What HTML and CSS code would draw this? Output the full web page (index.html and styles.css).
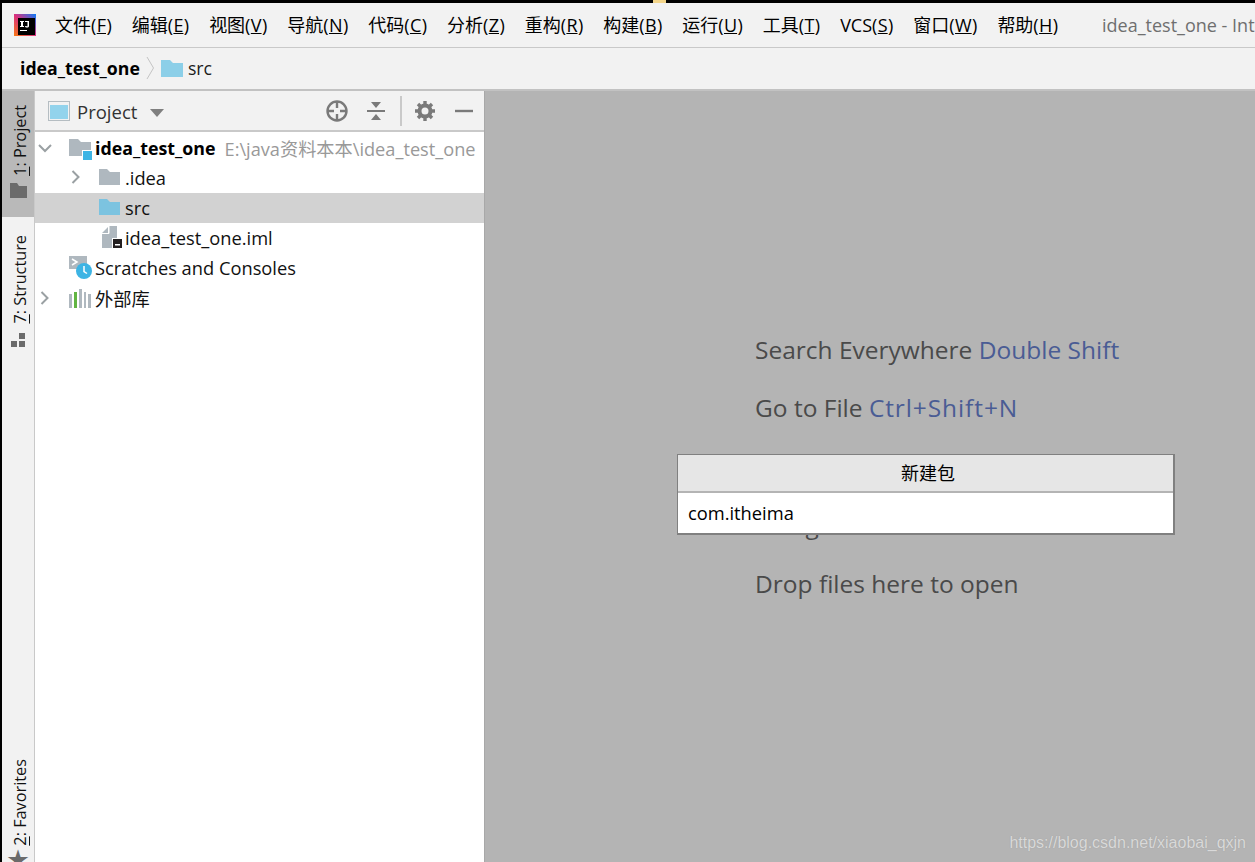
FILE: index.html
```html
<!DOCTYPE html>
<html lang="zh">
<head>
<meta charset="utf-8">
<title>idea_test_one</title>
<link rel="stylesheet" href="styles.css">
</head>
<body>
<div class="window">
  <div class="topline"><span class="topline-spot"></span></div>
  <header class="menubar">
    <svg class="app-logo" width="22" height="22" viewBox="0 0 22 22">
      <defs><linearGradient id="lg" x1="0" y1="1" x2="1" y2="0"><stop offset="0" stop-color="#f97a12"/><stop offset=".5" stop-color="#d9307e"/><stop offset="1" stop-color="#087cfa"/></linearGradient></defs>
      <rect width="22" height="22" fill="url(#lg)"/>
      <rect x="4" y="4" width="17" height="17" fill="#000"/>
      <path d="M6 7h4v1H9v4h1v1H6v-1h1V8H6zM11 7h4v5c0 1-1 1.500-2 1.500s-2-.5-2-1.500h1.500c0 .5 1 .5 1 0V8H11zM6 16h7v1H6z" fill="#fff"/>
    </svg>
    <nav class="menu">
      <span>文件(<u>F</u>)</span>
      <span>编辑(<u>E</u>)</span>
      <span>视图(<u>V</u>)</span>
      <span>导航(<u>N</u>)</span>
      <span>代码(<u>C</u>)</span>
      <span>分析(<u>Z</u>)</span>
      <span>重构(<u>R</u>)</span>
      <span>构建(<u>B</u>)</span>
      <span>运行(<u>U</u>)</span>
      <span>工具(<u>T</u>)</span>
      <span>VCS(<u>S</u>)</span>
      <span>窗口(<u>W</u>)</span>
      <span>帮助(<u>H</u>)</span>
    </nav>
    <div class="window-title">idea_test_one - IntelliJ IDEA</div>
  </header>
  <div class="breadcrumb">
    <strong>idea_test_one</strong>
    <svg class="crumb-sep" width="9" height="24" viewBox="0 0 9 24"><path d="M1 1l6.500 11L1 23" fill="none" stroke="#c4c4c4"/></svg>
    <svg class="folder" width="22" height="17" viewBox="0 0 22 17"><path d="M0 0h9l3 3h10v14H0z" fill="#8ccfe8"/></svg>
    <span>src</span>
  </div>
  <div class="workspace">
    <aside class="stripe">
      <div class="stripe-top">
        <div class="vtab active">
          <svg width="17" height="15" viewBox="0 0 17 15"><path d="M0 0h7l2 3h8v12H0z" fill="#6b6b6b"/></svg>
          <span class="vlabel"><u>1</u>: Project</span>
        </div>
        <div class="vtab">
          <svg width="15" height="15" viewBox="0 0 15 15"><path d="M0 9h6v6H0zM8 1h6v6H8zM8 9h6v6H8z" fill="#6b6b6b"/></svg>
          <span class="vlabel"><u>7</u>: Structure</span>
        </div>
      </div>
      <div class="vtab bottom">
        <span class="star">★</span>
        <span class="vlabel"><u>2</u>: Favorites</span>
      </div>
    </aside>
    <section class="project">
      <div class="project-head">
        <svg class="view-icon" width="22" height="20" viewBox="0 0 22 20"><rect x=".5" y=".5" width="21" height="19" fill="#f2f2f2" stroke="#b5bdc2"/><rect x="2" y="4" width="18" height="14" fill="#92d3ec"/></svg>
        <span class="project-title">Project</span>
        <svg class="caret" width="14" height="8" viewBox="0 0 14 8"><path d="M0 0h14L7 8z" fill="#7f7f7f"/></svg>
        <div class="head-tools">
          <svg class="tool-locate" width="22" height="22" viewBox="0 0 22 22"><circle cx="11" cy="11" r="9.500" fill="none" stroke="#7a7a7a" stroke-width="2.400"/><path d="M11 2v6M11 14v6M2 11h6M14 11h6" stroke="#7a7a7a" stroke-width="2.400"/></svg>
          <svg class="tool-collapse" width="20" height="22" viewBox="0 0 20 22"><path d="M1 11h18" stroke="#7a7a7a" stroke-width="2"/><path d="M5 2h10l-5 6zM5 20h10l-5-6z" fill="#7a7a7a"/></svg>
          <span class="tool-sep"></span>
          <svg class="tool-gear" width="20" height="20" viewBox="0 0 20 20"><circle cx="10" cy="10" r="5.500" fill="none" stroke="#7a7a7a" stroke-width="4"/><path d="M10 0v4M10 16v4M0 10h4M16 10h4M3 3l3 3M14 14l3 3M17 3l-3 3M6 14l-3 3" stroke="#7a7a7a" stroke-width="3.400"/></svg>
          <svg class="tool-min" width="18" height="4" viewBox="0 0 18 4"><path d="M0 2h18" stroke="#7a7a7a" stroke-width="2.400"/></svg>
        </div>
      </div>
      <ul class="tree">
        <li class="row">
          <svg class="arrow" width="14" height="9" viewBox="0 0 14 9"><path d="M1 1l6 6 6-6" fill="none" stroke="#9aa0a3" stroke-width="2"/></svg>
          <svg class="node-icon root-icon" width="23" height="22" viewBox="0 0 23 22"><path d="M0 0h9l3 3h10v14H0z" fill="#afb8bf"/><rect x="13" y="11" width="10" height="11" fill="#fff"/><rect x="14" y="12" width="9" height="9" fill="#3db4e4"/></svg>
          <strong>idea_test_one</strong><span class="path">E:\java资料本本\idea_test_one</span>
        </li>
        <li class="row lvl1 lifted">
          <svg class="arrow" width="9" height="14" viewBox="0 0 9 14"><path d="M1 1l6 6-6 6" fill="none" stroke="#9aa0a3" stroke-width="2"/></svg>
          <svg class="node-icon" width="21" height="16" viewBox="0 0 21 16"><path d="M0 0h8l3 3h10v13H0z" fill="#afb8bf"/></svg>
          <span>.idea</span>
        </li>
        <li class="row lvl1 lifted selected">
          <span class="arrow-gap"></span>
          <svg class="node-icon" width="21" height="16" viewBox="0 0 21 16"><path d="M0 0h8l3 3h10v13H0z" fill="#7cc3e0"/></svg>
          <span>src</span>
        </li>
        <li class="row lvl1 lifted">
          <span class="arrow-gap"></span>
          <svg class="node-icon iml-icon" width="23" height="22" viewBox="0 0 23 22"><path d="M3 7l6-6v6zM3 8h7V0h8v22H3z" fill="#afb8bf"/><path d="M3 7.500h7V0" fill="none" stroke="#fff"/><rect x="13" y="12" width="10" height="10" fill="#fff"/><rect x="14" y="13" width="9" height="9" fill="#231f20"/><rect x="16" y="18" width="5" height="1.500" fill="#fff"/></svg>
          <span>idea_test_one.iml</span>
        </li>
        <li class="row lifted">
          <span class="arrow-gap"></span>
          <svg class="node-icon scratch-icon" width="23" height="23" viewBox="0 0 23 23"><path d="M0 0h18v13H0z" fill="#afb8bf"/><path d="M3 3l5 3-5 3" fill="none" stroke="#fff" stroke-width="1.500"/><circle cx="15" cy="15" r="8" fill="#3db4e4"/><path d="M15 10v5.500l3 2" fill="none" stroke="#fff" stroke-width="1.500"/></svg>
          <span>Scratches and Consoles</span>
        </li>
        <li class="row">
          <svg class="arrow" width="9" height="14" viewBox="0 0 9 14"><path d="M1 1l6 6-6 6" fill="none" stroke="#9aa0a3" stroke-width="2"/></svg>
          <svg class="node-icon lib-icon" width="22" height="19" viewBox="0 0 22 19"><path d="M0 5h3v14H0zM10 0h3v19h-3zM15 3h2v16h-2zM19 5h3v14h-3z" fill="#afb8bf"/><path d="M5 3h3v16H5z" fill="#62b543"/></svg>
          <span>外部库</span>
        </li>
      </ul>
    </section>
    <main class="editor">
      <p>Search Everywhere <em>Double Shift</em></p>
      <p>Go to File <em class="keys">Ctrl+Shift+N</em></p>
      <p>Recent Files <em>Ctrl+E</em></p>
      <p>Navigation Bar <em>Alt+Home</em></p>
      <p>Drop files here to open</p>
      <div class="dialog">
        <div class="dialog-title">新建包</div>
        <div class="dialog-input">com.itheima</div>
      </div>
      <div class="watermark">https://blog.csdn.net/xiaobai_qxjn</div>
    </main>
  </div>
</div>
</body>
</html>
```
FILE: styles.css
```css
* { box-sizing: border-box; }
html, body { margin: 0; height: 100%; overflow: hidden; }
body {
  background: #000;
  font-family: "Open Sans", "Noto Sans CJK SC", sans-serif;
  color: #000;
}
.window {
  width: 1255px;
  height: 862px;
  display: flex;
  flex-direction: column;
  padding-left: 2px;
  overflow: hidden;
}
.topline { height: 3px; flex: none; display: flex; padding-left: 651px; }
.topline-spot { width: 13px; height: 3px; background: #f3d58a; }

.menubar {
  height: 45px;
  flex: none;
  background: #f2f2f2;
  border-bottom: 1px solid #c9c9c9;
  display: flex;
  align-items: center;
  padding-left: 12px;
  white-space: nowrap;
  overflow: hidden;
  font-size: 18px;
}
.app-logo { flex: none; margin-right: 19px; }
.menu { display: flex; gap: 20px; flex: none; width: 1029px; color: #000; }
.menu span { line-height: 24px; }
.menu u { margin: 0 .4px; }
.window-title { color: #6f6f6f; font-size: 18px; margin-left: 18px; }

.breadcrumb {
  height: 43px;
  flex: none;
  background: #f2f2f2;
  border-bottom: 2px solid #c2c2c2;
  display: flex;
  align-items: center;
  padding: 0 0 1px 18px;
  font-size: 17.700px;
  color: #1c1c1c;
}
.breadcrumb strong { font-weight: 700; color: #000; }
.crumb-sep { margin: 0 6px 0 6px; }
.folder { margin-right: 5px; }

.workspace { flex: 1; display: flex; min-height: 0; }

.stripe {
  width: 33px;
  flex: none;
  background: #f2f2f2;
  border-right: 1px solid #c9c9c9;
  display: flex;
  flex-direction: column;
  justify-content: space-between;
  overflow: hidden;
}
.vtab {
  display: flex;
  flex-direction: column-reverse;
  align-items: center;
  gap: 8px;
  padding: 18px 0 0;
  color: #111;
}
.vtab.active { background: #b9b9b9; height: 126px; justify-content: flex-end; padding: 14px 0 18px; gap: 7px; }
.vlabel {
  writing-mode: vertical-rl;
  transform: rotate(180deg);
  font-size: 16.300px;
  line-height: 22px;
  white-space: nowrap;
  margin-left: 4px;
}
.vtab.bottom { padding: 0; margin-bottom: -5px; gap: 3px; }
.star { font-size: 22px; line-height: 18px; color: #6b6b6b; }

.project {
  width: 450px;
  flex: none;
  background: #fff;
  border-right: 1px solid #a8a8a8;
  overflow: hidden;
}
.project-head {
  height: 41px;
  background: #f2f2f2;
  border-bottom: 2px solid #c9c9c9;
  display: flex;
  align-items: center;
  padding: 1px 11px 0 13px;
  font-size: 18.500px;
  color: #333;
}
.project-title { margin-left: 7px; }
.caret { margin-left: 13px; margin-top: 3px; }
.head-tools { margin-left: auto; display: flex; align-items: center; }
.tool-collapse { margin-left: 18px; }
.tool-sep { width: 2px; height: 30px; background: #c9c9c9; margin-left: 14px; }
.tool-gear { margin-left: 13px; }
.tool-min { margin-left: 20px; }

.tree { list-style: none; margin: 0; padding: 1px 0 0; font-size: 18.300px; color: #111; }
.row {
  height: 30px;
  display: flex;
  align-items: center;
  white-space: nowrap;
  padding-left: 3px;
}
.row.lifted { padding-bottom: 2px; }
.row .arrow { width: 14px; flex: none; margin-right: 17px; }
.arrow-gap { width: 14px; flex: none; margin-right: 17px; }
.node-icon { flex: none; margin-right: 5px; }
.root-icon { margin-right: 3px; margin-top: 4px; }
.scratch-icon { margin-right: 3px; }
.lib-icon { margin-right: 4px; }
.iml-icon { margin-right: 3px; }
.row.lvl1 { padding-left: 34px; }
.row.lvl1 .arrow, .row.lvl1 .arrow-gap { margin-right: 16px; }
.row.selected { background: #d2d2d2; }
.row strong { font-weight: 700; color: #000; font-size: 17.800px; }
.path { color: #999; margin-left: 9px; font-size: 18.200px; }

.editor {
  flex: 1;
  position: relative;
  background: #b4b4b4;
  padding: 238px 0 0 270px;
  font-size: 24.500px;
  color: #4a4a4a;
  overflow: hidden;
}
.editor p { margin: 0; height: 58.400px; line-height: 42px; white-space: nowrap; }
.editor em { font-style: normal; color: #4a5c94; }
.editor .keys { letter-spacing: .9px; }

.dialog {
  position: absolute;
  left: 192px;
  top: 363px;
  width: 498px;
  height: 81px;
  background: #fff;
  border: 2px solid #808080;
  border-top-width: 1px;
  border-left-width: 1px;
  color: #000;
}
.dialog-title {
  height: 38px;
  background: #e6e6e6;
  border-bottom: 2px solid #b4b4b4;
  text-align: center;
  line-height: 37px;
  font-size: 18px;
  padding-left: 5px;
}
.dialog-input { height: 40px; line-height: 39px; padding-left: 10px; font-size: 18.300px; }

.watermark {
  position: absolute;
  right: 9px;
  bottom: 9px;
  font-family: "Liberation Sans", sans-serif;
  font-size: 16px;
  line-height: 20px;
  color: #d9d9d9;
  text-shadow: 0 0 1px #999;
}
```
